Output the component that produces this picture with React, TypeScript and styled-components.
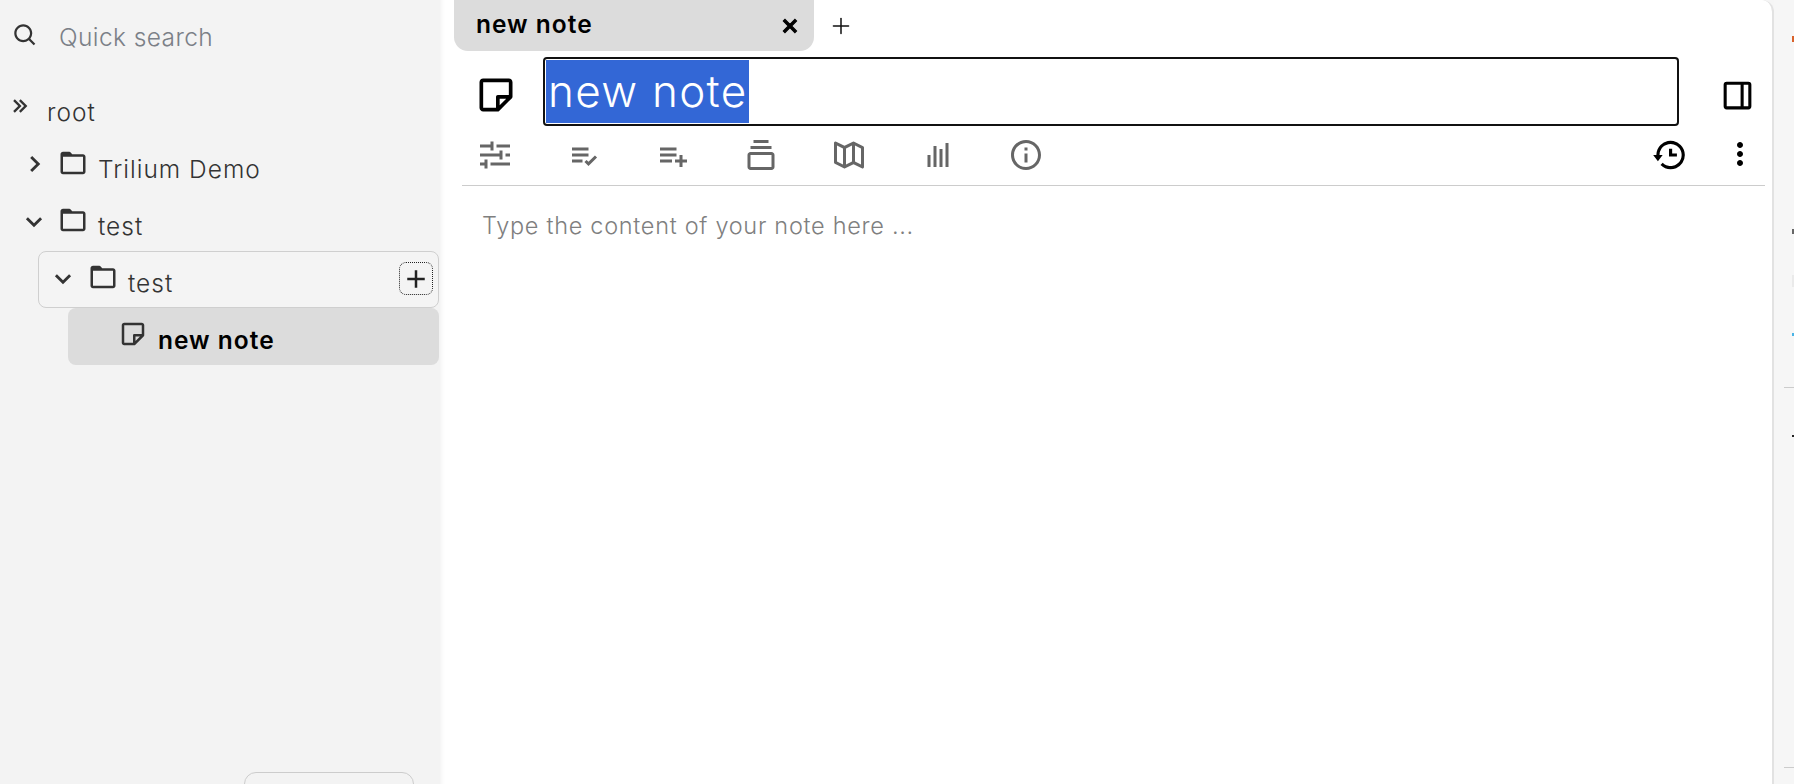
import React from "react";
import styled, { createGlobalStyle } from "styled-components";
import {
  BiSearch, BiChevronsRight, BiChevronRight, BiChevronDown, BiFolder, BiNote, BiPlus, BiX,
  BiDockRight, BiSlider, BiListCheck, BiListPlus, BiCollection, BiMapAlt, BiBarChart, BiInfoCircle,
  BiHistory, BiDotsVerticalRounded,
} from "react-icons/bi";
import { Plus } from "lucide-react";

const Global = createGlobalStyle`
  html, body { margin: 0; padding: 0; height: 100%; overflow: hidden; background: #f5f5f5; }
  #root { height: 100%; }
  * { box-sizing: border-box; }
`;

const Shell = styled.div`
  display: grid;
  grid-template-columns: 440px 1334px 20px;
  height: 784px;
  font-family: Inter, "Open Sans", sans-serif;
  font-weight: 300;
  color: #333;
`;

const Sidebar = styled.aside`
  background: #f3f3f3;
  display: flex;
  flex-direction: column;
  overflow: hidden;
`;

const SearchBar = styled.div`
  height: 80px;
  display: flex;
  align-items: flex-start;
  padding: 22px 0 0 12px;
  gap: 20px;
  color: #333;
  font-size: 24.5px;
  svg { flex: none; }
`;

const SearchHint = styled.span`
  color: #7b8087;
  line-height: 30px;
  letter-spacing: 0.4px;
`;

const TreeRow = styled.div<{ $indent: number; $framed?: boolean; $active?: boolean }>`
  height: 57px;
  margin-left: ${(p) => p.$indent}px;
  margin-right: 1px;
  display: flex;
  align-items: center;
  position: relative;
  border-radius: 8px;
  border: 1px solid ${(p) => (p.$framed ? "#cfcfcf" : "transparent")};
  background: ${(p) => (p.$active ? "#dcdcdc" : p.$framed ? "#f4f4f4" : "transparent")};
  font-size: 24.5px;
  letter-spacing: 1px;
`;

const Expander = styled.span<{ $width: number; $lift: number }>`
  width: ${(p) => p.$width}px;
  flex: none;
  display: flex;
  justify-content: flex-end;
  margin-top: ${(p) => p.$lift}px;
  color: #333;
`;

const RowIcon = styled.span<{ $gap: number; $left?: number }>`
  display: flex;
  flex: none;
  margin-top: -5px;
  margin-left: ${(p) => p.$left ?? 0}px;
  margin-right: ${(p) => p.$gap}px;
  color: #333;
`;

const RowLabel = styled.span<{ $bold?: boolean; $left?: number }>`
  font-weight: ${(p) => (p.$bold ? 600 : 300)};
  color: ${(p) => (p.$bold ? "#000" : "#333")};
  line-height: 30px;
  margin-left: ${(p) => p.$left ?? 0}px;
  margin-top: 6px;
`;

const AddButton = styled.button`
  position: absolute;
  right: 5px;
  top: 10px;
  width: 34px;
  height: 33px;
  padding: 0;
  display: flex;
  align-items: center;
  justify-content: center;
  background: transparent;
  color: #222;
  border: 1px dotted #222;
  border-radius: 7px;
`;

const SidebarFoot = styled.div`
  margin-top: auto;
  display: flex;
  justify-content: flex-end;
  padding-right: 26px;
  height: 12px;
`;

const FootButton = styled.div`
  width: 170px;
  height: 30px;
  border: 1px solid #ccc;
  border-radius: 12px;
  flex: none;
`;

const Main = styled.main`
  background: #fff;
  border-right: 2px solid #e2e2e2;
  border-top-right-radius: 12px;
  box-shadow: inset 6px 0 5px -5px #f0f0f0;
  display: flex;
  flex-direction: column;
  overflow: hidden;
`;

const TabStrip = styled.div`
  height: 57px;
  flex: none;
  display: flex;
  align-items: flex-start;
  padding-left: 14px;
`;

const Tab = styled.div`
  width: 360px;
  height: 51px;
  background: #dcdcdc;
  border-radius: 0 0 14px 14px;
  display: flex;
  align-items: center;
  justify-content: space-between;
  padding: 0 10px 3px 22px;
  color: #000;
  font-size: 24.5px;
  letter-spacing: 1px;
  font-weight: 600;
`;

const CloseMark = styled.span`
  display: flex;
  margin-top: 3px;
  color: #000;
`;

const NewTab = styled.span`
  display: flex;
  margin: 13px 0 0 14px;
  color: #111;
`;

const TitleRow = styled.div`
  height: 69px;
  flex: none;
  display: flex;
  align-items: center;
`;

const TitleIcon = styled.span`
  display: flex;
  color: #000;
  margin-left: 34px;
  margin-top: 6px;
`;

const TitleBox = styled.div`
  width: 1136px;
  height: 69px;
  margin-left: 25px;
  border: 2px solid #111;
  border-radius: 4px;
  padding: 1px;
  display: flex;
  background: #fff;
`;

const TitleSelection = styled.span`
  background: #3367d6;
  color: #fff;
  font-size: 44px;
  letter-spacing: 1.3px;
  font-weight: 300;
  height: 63px;
  line-height: 63px;
  padding: 0 2px;
`;

const DockIcon = styled.span`
  display: flex;
  margin-left: 40px;
  margin-top: 7px;
  color: #000;
`;

const Toolbar = styled.div`
  height: 60px;
  flex: none;
  margin: 0 7px 0 22px;
  border-bottom: 1px solid #ccc;
  display: flex;
  align-items: flex-start;
  gap: 52.5px;
  padding: 11px 7px 0 15px;
`;

const Tool = styled.span`
  display: flex;
  color: #666;
`;

const ToolEnd = styled.span`
  display: flex;
  gap: 34px;
  margin-left: auto;
  margin-top: -1px;
  color: #000;
`;

const Placeholder = styled.div`
  padding: 26px 0 0 42px;
  font-size: 23.5px;
  letter-spacing: 0.7px;
  line-height: 28px;
  color: #7f7f7f;
`;

const Launcher = styled.aside`
  background: #f6f6f6;
  display: flex;
  flex-direction: column;
  align-items: flex-end;
  overflow: hidden;
`;

const Glimpse = styled.span<{ $top: number; $color: string; $height: number }>`
  width: 2px;
  height: ${(p) => p.$height}px;
  margin-top: ${(p) => p.$top}px;
  background: ${(p) => p.$color};
  flex: none;
`;

const Rule = styled.span<{ $top: number }>`
  width: 10px;
  height: 1px;
  margin-top: ${(p) => p.$top}px;
  background: #ccc;
  flex: none;
`;

export default function App() {
  return (
    <>
      <Global />
      <Shell>
        <Sidebar>
          <SearchBar>
            <BiSearch size={27} />
            <SearchHint>Quick search</SearchHint>
          </SearchBar>
          <TreeRow $indent={0}>
            <Expander $width={34} $lift={-6}><BiChevronsRight size={28} /></Expander>
            <RowLabel $left={12}>root</RowLabel>
          </TreeRow>
          <TreeRow $indent={0}>
            <Expander $width={50} $lift={-3}><BiChevronRight size={34} /></Expander>
            <RowIcon $gap={10} $left={7}><BiFolder size={30} /></RowIcon>
            <RowLabel>Trilium Demo</RowLabel>
          </TreeRow>
          <TreeRow $indent={0}>
            <Expander $width={50} $lift={-3}><BiChevronDown size={34} /></Expander>
            <RowIcon $gap={10} $left={7}><BiFolder size={30} /></RowIcon>
            <RowLabel>test</RowLabel>
          </TreeRow>
          <TreeRow $indent={38} $framed>
            <Expander $width={41} $lift={-3}><BiChevronDown size={34} /></Expander>
            <RowIcon $gap={10} $left={8}><BiFolder size={30} /></RowIcon>
            <RowLabel>test</RowLabel>
            <AddButton><BiPlus size={30} /></AddButton>
          </TreeRow>
          <TreeRow $indent={68} $active>
            <Expander $width={49} $lift={-3} />
            <RowIcon $gap={10}><BiNote size={30} /></RowIcon>
            <RowLabel $bold>new note</RowLabel>
          </TreeRow>
          <SidebarFoot><FootButton /></SidebarFoot>
        </Sidebar>
        <Main>
          <TabStrip>
            <Tab>
              new note
              <CloseMark><BiX size={28} stroke="currentColor" strokeWidth={1} /></CloseMark>
            </Tab>
            <NewTab><Plus size={26} strokeWidth={1.4} /></NewTab>
          </TabStrip>
          <TitleRow>
            <TitleIcon><BiNote size={44} /></TitleIcon>
            <TitleBox><TitleSelection>new note</TitleSelection></TitleBox>
            <DockIcon><BiDockRight size={37} /></DockIcon>
          </TitleRow>
          <Toolbar>
            <Tool><BiSlider size={36} /></Tool>
            <Tool><BiListCheck size={36} /></Tool>
            <Tool><BiListPlus size={36} /></Tool>
            <Tool><BiCollection size={36} /></Tool>
            <Tool><BiMapAlt size={36} /></Tool>
            <Tool><BiBarChart size={36} /></Tool>
            <Tool><BiInfoCircle size={36} /></Tool>
            <ToolEnd>
              <BiHistory size={38} />
              <BiDotsVerticalRounded size={36} />
            </ToolEnd>
          </Toolbar>
          <Placeholder>Type the content of your note here ...</Placeholder>
        </Main>
        <Launcher>
          <Glimpse $top={36} $color="#d9622b" $height={6} />
          <Glimpse $top={187} $color="#666" $height={5} />
          <Glimpse $top={41} $color="#eaeaea" $height={12} />
          <Glimpse $top={46} $color="#4ab4e6" $height={3} />
          <Rule $top={51} />
          <Glimpse $top={47} $color="#222" $height={2} />
          <Rule $top={330} />
        </Launcher>
      </Shell>
    </>
  );
}
